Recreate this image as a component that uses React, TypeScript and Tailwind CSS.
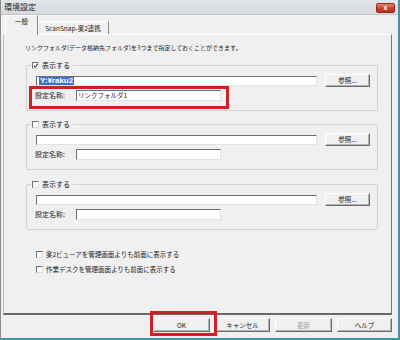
import React from "react"

const font = "font-['Noto_Sans_CJK_JP','Noto_Sans',sans-serif]"

function Check({ checked }: { checked?: boolean }) {
  return (
    <span className="relative inline-block w-[7px] h-[7px] shrink-0 bg-white border-t border-l border-t-[#6f6f6f] border-l-[#6f6f6f] border-r border-b border-r-[#dcdcdc] border-b-[#dcdcdc]">
      {checked && (
        <svg viewBox="0 0 7 7" className="absolute left-0 top-0 w-[6px] h-[6px]">
          <path d="M0.8 3.2 L2.5 5 L5.6 0.9" fill="none" stroke="#222" strokeWidth="1.2" />
        </svg>
      )}
    </span>
  )
}

function Btn({ children, className = "", disabled }: { children: React.ReactNode; className?: string; disabled?: boolean }) {
  return (
    <div
      className={`flex items-center justify-center bg-[#f0f0f0] border-t border-l border-t-white border-l-white border-r border-b border-r-[#6a6a6a] border-b-[#6a6a6a] shadow-[inset_-1px_-1px_0_#b4b4b4] text-[6.5px] leading-none ${disabled ? "text-[#a6a6a6]" : "text-[#1a1a1a]"} ${className}`}
    >
      {children}
    </div>
  )
}

function Input({ className = "", children }: { className?: string; children?: React.ReactNode }) {
  return (
    <div className={`flex items-center bg-white border-t border-l border-t-[#6f6f6f] border-l-[#6f6f6f] border-r border-b border-r-[#e2e2e2] border-b-[#e2e2e2] pl-[1px] ${className}`}>
      {children}
    </div>
  )
}

function Group({ checked, path, name, className = "" }: { checked?: boolean; path?: React.ReactNode; name?: string; className?: string }) {
  return (
    <div className={`ml-[22px] mr-[13px] border border-[#d2d2d2] rounded-[2px] pl-[9px] pr-[6px] pb-[9px] ${className}`}>
      <div className="-mt-[6px] -ml-[5px] w-fit h-[10px] flex items-center gap-[3px] bg-[#f0f0f0] pl-[1px] pr-[3px]">
        <Check checked={checked} />
        <span className="text-[7px] leading-none text-[#1a1a1a]">表示する</span>
      </div>
      <div className="mt-[4px] h-[13px] flex items-center gap-[8px]">
        <Input className="w-[281px] h-[10px]">{path}</Input>
        <Btn className="w-[45px] h-[13px]">参照...</Btn>
      </div>
      <div className="mt-[3px] h-[11px] flex items-center -ml-[1px]">
        <span className="w-[41px] text-[7px] leading-none text-[#1a1a1a]">設定名称:</span>
        <Input className="w-[145px] h-[11px]">
          <span className="text-[6.5px] leading-none text-[#1a1a1a]">{name}</span>
        </Input>
      </div>
    </div>
  )
}

export default function App() {
  return (
    <div className={`relative w-[400px] h-[340px] flex flex-col bg-[#f0f0f0] border-l border-l-[#8c8c8c] border-r-2 border-r-[#4f8ea3] border-b-2 border-b-[#3f93ac] ${font}`}>
      {/* title bar */}
      <div className="h-[15px] shrink-0 flex items-center justify-between pl-[3px] pr-[3px] bg-gradient-to-b from-[#e4e7ea] to-[#d6dade] border-b border-b-[#c2c6cb]">
        <span className="text-[8px] leading-none text-[#222]">環境設定</span>
        <div className="w-[19px] h-[10px] mt-[1px] rounded-[2px] border border-[#8e2a20] bg-gradient-to-b from-[#e08a7a] via-[#c8452f] to-[#b9301c] flex items-center justify-center">
          <span className="text-[7px] leading-none font-bold text-white font-['Liberation_Sans',sans-serif]">x</span>
        </div>
      </div>

      {/* tabs */}
      <div className="h-[19px] shrink-0 flex items-end pl-[4px]">
        <div className="h-[20px] w-[33px] -mb-[1px] z-10 bg-[#f0f0f0] border-t border-l border-t-white border-l-white border-r border-r-[#8a8a8a] flex items-start justify-center pt-[2px]">
          <span className="text-[6.5px] leading-none text-[#1a1a1a]">一般</span>
        </div>
        <div className="h-[13px] w-[71px] border-t border-t-white border-r border-r-[#8a8a8a] flex items-center justify-center">
          <span className="text-[6.5px] leading-none text-[#1a1a1a]">ScanSnap-楽2連携</span>
        </div>
      </div>

      {/* panel */}
      <div className="h-[281px] shrink-0 ml-[2px] mr-[6px] flex flex-col border-t border-t-white border-l border-l-[#bdbdbd] border-r border-r-[#7a7a7a] border-b-2 border-b-[#6a6a6a]">
        <div className="pt-[8px] pl-[21px] h-[17px] text-[6px] leading-[9px] text-[#1a1a1a]">
          リンクフォルダ(データ格納先フォルダ)を3つまで指定しておくことができます。
        </div>
        <Group
          className="mt-[13px]"
          checked
          path={
            <span className="ml-[1px] px-[1px] bg-[#3a73d4] text-white text-[8px] leading-[8px] font-bold font-['Liberation_Sans',sans-serif]">
              Y:¥raku2
            </span>
          }
          name="リンクフォルダ1"
        />
        <Group className="mt-[13px]" />
        <Group className="mt-[14px]" />
        <div className="mt-[19px] pl-[32px] h-[10px] flex items-center gap-[3px]">
          <Check />
          <span className="text-[6.5px] leading-none text-[#1a1a1a]">楽2ビューアを管理画面よりも前面に表示する</span>
        </div>
        <div className="mt-[5px] pl-[32px] h-[10px] flex items-center gap-[3px]">
          <Check />
          <span className="text-[6.5px] leading-none text-[#1a1a1a]">作業デスクを管理画面よりも前面に表示する</span>
        </div>
      </div>

      {/* buttons */}
      <div className="mt-[3px] pr-[6px] flex justify-end gap-[5px]">
        <Btn className="w-[57px] h-[14px]">OK</Btn>
        <Btn className="w-[55px] h-[14px]">キャンセル</Btn>
        <Btn className="w-[57px] h-[14px]" disabled>更新</Btn>
        <Btn className="w-[55px] h-[14px]">ヘルプ</Btn>
      </div>

      {/* red annotation frames */}
      <div className="absolute left-[28px] top-[86px] w-[200px] h-[23px] border-[3px] border-[#cf1f27]" />
      <div className="absolute left-[149px] top-[311px] w-[67px] h-[25px] border-[3px] border-[#cf1f27]" />
    </div>
  )
}
